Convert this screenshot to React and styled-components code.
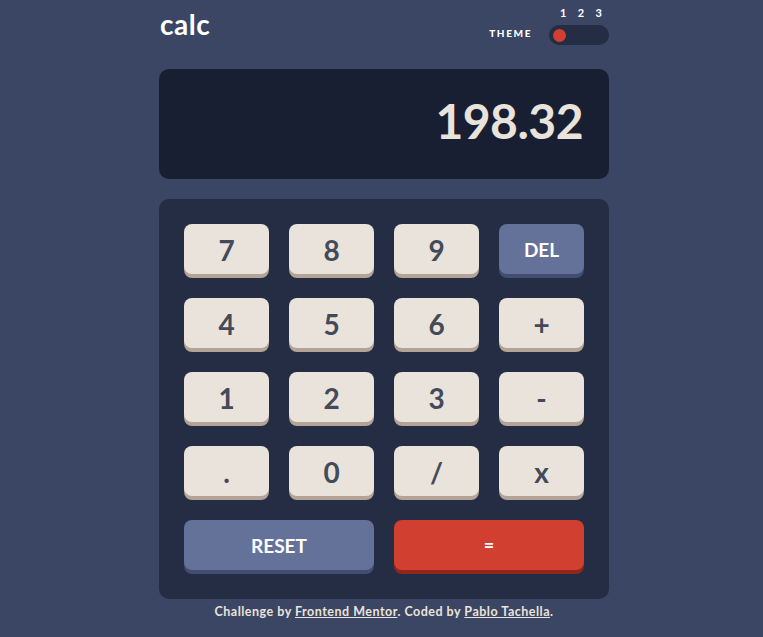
import React from 'react';
import styled, { createGlobalStyle } from 'styled-components';

const GlobalStyle = createGlobalStyle`
  html, body {
    margin: 0;
    padding: 0;
    background-color: #3a4663;
    font-family: 'Lato', 'Noto Sans', sans-serif;
  }
`;

const Page = styled.div`
  min-height: 637px;
  display: flex;
  justify-content: center;
  padding-left: 5px;
  box-sizing: border-box;
`;

const Calculator = styled.main`
  width: 450px;
  display: flex;
  flex-direction: column;
`;

const Header = styled.header`
  display: flex;
  justify-content: space-between;
  align-items: flex-end;
  height: 45px;
  margin-bottom: 24px;
`;

const Logo = styled.h1`
  margin: 0 0 7px 1px;
  font-size: 28px;
  font-weight: 700;
  letter-spacing: 0.5px;
  color: #ffffff;
  line-height: 1;
`;

const ThemeSwitch = styled.div`
  display: flex;
  align-items: flex-end;
  gap: 17px;
`;

const ThemeLabel = styled.span`
  font-size: 10px;
  font-weight: 900;
  letter-spacing: 1.6px;
  color: #ffffff;
  margin-bottom: 6px;
`;

const ToggleWrap = styled.div`
  display: flex;
  flex-direction: column;
  align-items: center;
  width: 60px;
`;

const ToggleNumbers = styled.div`
  display: flex;
  justify-content: space-between;
  width: 42px;
  padding-left: 4px;
  font-size: 11px;
  font-weight: 700;
  color: #ffffff;
  margin-bottom: 6px;
`;

const Track = styled.div`
  width: 60px;
  height: 20px;
  border-radius: 10px;
  background-color: #242d44;
  display: flex;
  align-items: center;
  padding: 0 4px;
  box-sizing: border-box;
`;

const Knob = styled.span`
  width: 13px;
  height: 13px;
  border-radius: 50%;
  background-color: #d03f2f;
`;

const Screen = styled.section`
  height: 110px;
  border-radius: 10px;
  background-color: #181f33;
  display: flex;
  align-items: center;
  justify-content: flex-end;
  padding: 0 26px 8px;
  box-sizing: border-box;
  margin-bottom: 20px;
`;

const Output = styled.span`
  font-size: 48px;
  font-weight: 700;
  color: #eae3dc;
  letter-spacing: -0.5px;
`;

const Keypad = styled.section`
  background-color: #242d44;
  border-radius: 10px;
  padding: 25px;
  display: grid;
  grid-template-columns: repeat(4, 1fr);
  row-gap: 20px;
  column-gap: 20px;
`;

const palette = {
  plain: { bg: '#eae3dc', shadow: '#b3a497', color: '#434a59' },
  blue: { bg: '#647198', shadow: '#414e73', color: '#ffffff' },
  red: { bg: '#d03f2f', shadow: '#93261a', color: '#ffffff' },
};

const Key = styled.button`
  grid-column: span ${(p) => p.$span || 1};
  height: 50px;
  margin-bottom: 4px;
  border: none;
  border-radius: 8px;
  background-color: ${(p) => palette[p.$kind].bg};
  box-shadow: 0 4px 0 ${(p) => palette[p.$kind].shadow};
  color: ${(p) => palette[p.$kind].color};
  font-family: inherit;
  font-weight: 700;
  font-size: ${(p) => (p.$kind === 'plain' ? '28px' : p.$kind === 'red' ? '18px' : '19px')};
  padding: ${(p) => (p.$kind === 'plain' ? '2px 0 0' : '0')};
  cursor: pointer;
`;

const Footer = styled.p`
  margin: 5px 0 0;
  text-align: center;
  font-size: 12.5px;
  font-weight: 700;
  letter-spacing: 0.5px;
  color: #eae3dc;
`;

const FooterLink = styled.a`
  color: #eae3dc;
  text-decoration: underline;
`;

const keys = [
  ['7'], ['8'], ['9'], ['DEL', 'blue'],
  ['4'], ['5'], ['6'], ['+'],
  ['1'], ['2'], ['3'], ['-'],
  ['.'], ['0'], ['/'], ['x'],
  ['RESET', 'blue', 2], ['=', 'red', 2],
];

export default function App() {
  return (
    <>
      <GlobalStyle />
      <Page>
        <Calculator>
          <Header>
            <Logo>calc</Logo>
            <ThemeSwitch>
              <ThemeLabel>THEME</ThemeLabel>
              <ToggleWrap>
                <ToggleNumbers>
                  <span>1</span>
                  <span>2</span>
                  <span>3</span>
                </ToggleNumbers>
                <Track>
                  <Knob />
                </Track>
              </ToggleWrap>
            </ThemeSwitch>
          </Header>

          <Screen>
            <Output>198.32</Output>
          </Screen>

          <Keypad>
            {keys.map(([label, kind = 'plain', span]) => (
              <Key key={label} $kind={kind} $span={span}>
                {label}
              </Key>
            ))}
          </Keypad>

          <Footer>
            Challenge by <FooterLink href="#">Frontend Mentor</FooterLink>. Coded by{' '}
            <FooterLink href="#">Pablo Tachella</FooterLink>.
          </Footer>
        </Calculator>
      </Page>
    </>
  );
}
